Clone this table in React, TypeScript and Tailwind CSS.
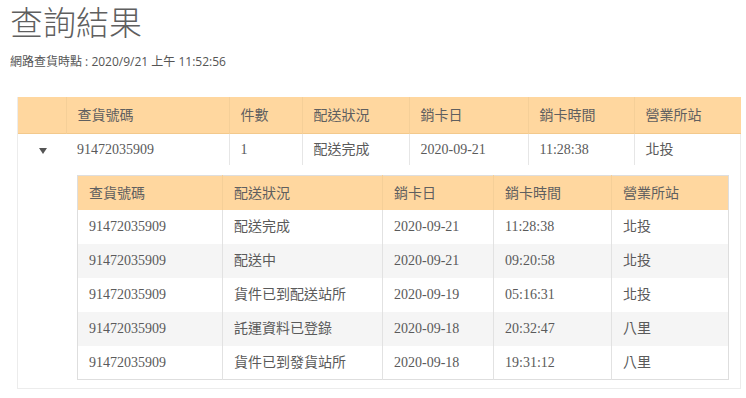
import React from "react";

const CJK = '"Noto Sans CJK TC", "Noto Sans", sans-serif';
const CELL = '"Liberation Serif", "Noto Sans CJK TC", serif';

const outerCols = [48, 163, 73, 107, 119, 106, 107];
const outerHead = ["", "查貨號碼", "件數", "配送狀況", "銷卡日", "銷卡時間", "營業所站"];
const innerCols = [145, 160, 111, 118, 117];
const innerHead = ["查貨號碼", "配送狀況", "銷卡日", "銷卡時間", "營業所站"];
const innerRows = [
  ["91472035909", "配送完成", "2020-09-21", "11:28:38", "北投"],
  ["91472035909", "配送中", "2020-09-21", "09:20:58", "北投"],
  ["91472035909", "貨件已到配送站所", "2020-09-19", "05:16:31", "北投"],
  ["91472035909", "託運資料已登錄", "2020-09-18", "20:32:47", "八里"],
  ["91472035909", "貨件已到發貨站所", "2020-09-18", "19:31:12", "八里"],
];

export default function App() {
  return (
    <div className="w-[746px] h-[398px] bg-white overflow-hidden text-[#5a5a5a]">
      <div className="pl-[10px] pt-[1px]">
        <h1 className="text-[33px] leading-[40px] font-light text-[#5f5f5f]" style={{ fontFamily: CJK }}>
          查詢結果
        </h1>
        <p className="mt-[13px] text-[12px] leading-[16px] text-[#555]" style={{ fontFamily: '"Open Sans", "Noto Sans CJK TC", sans-serif' }}>
          網路查貨時點 : 2020/9/21 上午 11:52:56
        </p>
      </div>
      <div className="ml-[17px] mt-[27px] w-[724px] border-l border-r border-b border-[#ececec]">
        <table className="table-fixed border-collapse w-[722px]">
          <colgroup>
            {outerCols.map((w, i) => (
              <col key={i} style={{ width: w }} />
            ))}
          </colgroup>
          <thead>
            <tr className="h-[36px] bg-[#ffd79f] border-b border-[#f3c98c]">
              {outerHead.map((h, i) => (
                <th
                  key={i}
                  className={`text-left font-normal text-[14px] pl-[11px] text-[#5f5f5f] ${i < 6 ? "border-r border-[#f5cf98]" : ""}`}
                  style={{ fontFamily: CJK }}
                >
                  {h}
                </th>
              ))}
            </tr>
          </thead>
          <tbody>
            <tr className="h-[32px] text-[14px] text-[#5a5a5a]" style={{ fontFamily: CELL }}>
              <td className="text-center">
                <span className="inline-block w-0 h-0 border-l-[4px] border-r-[4px] border-t-[6px] border-l-transparent border-r-transparent border-t-[#555] ml-[2px] mt-[4px]" />
              </td>
              <td className="pl-[11px]">91472035909</td>
              <td className="pl-[11px] border-l border-[#e6e6e6]">1</td>
              <td className="pl-[11px] border-l border-[#e6e6e6]">配送完成</td>
              <td className="pl-[11px] border-l border-[#e6e6e6]">2020-09-21</td>
              <td className="pl-[11px] border-l border-[#e6e6e6]">11:28:38</td>
              <td className="pl-[11px] border-l border-[#e6e6e6]">北投</td>
            </tr>
            <tr>
              <td colSpan={7} className="pl-[59px] pr-[11px] pt-[10px] pb-[8px]">
                <table className="table-fixed border-collapse w-[651px] border border-[#dedede]">
                  <colgroup>
                    {innerCols.map((w, i) => (
                      <col key={i} style={{ width: w }} />
                    ))}
                  </colgroup>
                  <thead>
                    <tr className="h-[34px] bg-[#ffd79f]">
                      {innerHead.map((h, i) => (
                        <th
                          key={i}
                          className={`text-left font-normal text-[14px] pl-[11px] text-[#5f5f5f] ${i < 4 ? "border-r border-[#f5cf98]" : ""}`}
                          style={{ fontFamily: CJK }}
                        >
                          {h}
                        </th>
                      ))}
                    </tr>
                  </thead>
                  <tbody>
                    {innerRows.map((r, ri) => (
                      <tr
                        key={ri}
                        className={`h-[34px] text-[14px] text-[#5a5a5a] ${ri % 2 === 1 ? "bg-[#f5f5f5]" : "bg-white"}`}
                        style={{ fontFamily: CELL }}
                      >
                        {r.map((c, ci) => (
                          <td key={ci} className={`pl-[11px] ${ci < 4 ? "border-r border-[#e2e2e2]" : ""}`}>
                            {c}
                          </td>
                        ))}
                      </tr>
                    ))}
                  </tbody>
                </table>
              </td>
            </tr>
          </tbody>
        </table>
      </div>
    </div>
  );
}
